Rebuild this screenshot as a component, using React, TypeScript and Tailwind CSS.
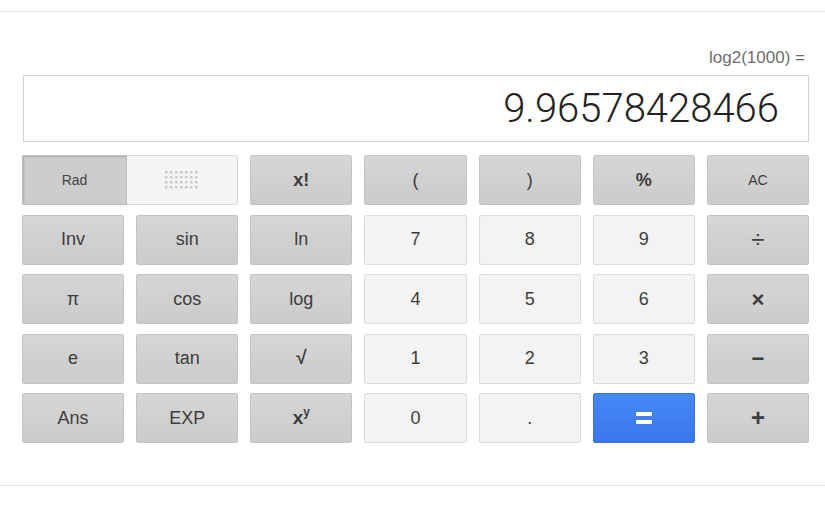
import React from "react";

type Kind = "dark" | "light" | "blue";

const dark =
  "bg-gradient-to-b from-[#d6d6d6] to-[#cbcbcb] border border-[#c4c4c4] text-[#3d3d3d]";
const light = "bg-[#f3f3f3] border border-[#dcdcdc] text-[#3d3d3d]";
const blue = "bg-gradient-to-b from-[#4689f8] to-[#3a76ec] border border-[#3a72e0] text-white";

function Key({ kind, children, cls = "text-[18px]" }: { kind: Kind; children: React.ReactNode; cls?: string }) {
  const k = kind === "dark" ? dark : kind === "light" ? light : blue;
  return (
    <div className={`${k} rounded-[2px] flex items-center justify-center ${cls}`}>
      {children}
    </div>
  );
}

function Dots() {
  const dots = [];
  for (let r = 0; r < 4; r++)
    for (let c = 0; c < 7; c++)
      dots.push(<rect key={`${r}-${c}`} x={c * 5} y={r * 5} width="2.5" height="2.5" fill="#c9c9c9" />);
  return (
    <svg width="34" height="18" viewBox="0 0 34 18">
      {dots}
    </svg>
  );
}

export default function App() {
  const font = { fontFamily: "'Liberation Sans', Arial, sans-serif" };
  return (
    <div className="w-[825px] h-[510px] bg-white overflow-hidden" style={font}>
      <div className="mt-[11px] border-t border-[#e3e3e3] h-[475px] border-b flex flex-col">
        <div className="h-[30px] mt-[33px] pr-[20px] flex items-start justify-end text-[17px] text-[#6e6e6e]">
          log2(1000) =
        </div>
        <div className="ml-[23px] w-[786px] h-[67px] border border-[#d4d4d4] flex items-center justify-end pr-[29px] pt-[1px]">
          <span className="text-[40px] text-[#222] font-light leading-none" style={{ fontFamily: "Roboto, 'Liberation Sans', sans-serif" }}>
            9.96578428466
          </span>
        </div>
        <div className="ml-[22px] mt-[13px] w-[787px] grid grid-cols-7 gap-x-3 gap-y-[9.5px] auto-rows-[50px]">
          <div className="col-span-2 flex rounded-[2px] overflow-hidden">
            <div className="w-[105px] bg-[#cdcdcd] border border-[#bdbdbd] shadow-[inset_1px_1px_2px_rgba(0,0,0,0.15)] flex items-center justify-center text-[14px] text-[#444]">
              Rad
            </div>
            <div className="flex-1 bg-[#f4f4f4] border border-[#d8d8d8] border-l-0 flex items-center justify-center">
              <Dots />
            </div>
          </div>
          <Key kind="dark" cls="text-[18px] font-semibold">x!</Key>
          <Key kind="dark">(</Key>
          <Key kind="dark">)</Key>
          <Key kind="dark" cls="text-[18px] font-semibold">%</Key>
          <Key kind="dark" cls="text-[14px]">AC</Key>

          <Key kind="dark">Inv</Key>
          <Key kind="dark">sin</Key>
          <Key kind="dark">ln</Key>
          <Key kind="light">7</Key>
          <Key kind="light">8</Key>
          <Key kind="light">9</Key>
          <Key kind="dark" cls="text-[24px]">÷</Key>

          <Key kind="dark">π</Key>
          <Key kind="dark">cos</Key>
          <Key kind="dark">log</Key>
          <Key kind="light">4</Key>
          <Key kind="light">5</Key>
          <Key kind="light">6</Key>
          <Key kind="dark" cls="text-[22px] font-bold">×</Key>

          <Key kind="dark">e</Key>
          <Key kind="dark">tan</Key>
          <Key kind="dark" cls="text-[19px] font-semibold">√</Key>
          <Key kind="light">1</Key>
          <Key kind="light">2</Key>
          <Key kind="light">3</Key>
          <Key kind="dark" cls="text-[22px] font-bold">−</Key>

          <Key kind="dark">Ans</Key>
          <Key kind="dark">EXP</Key>
          <Key kind="dark" cls="text-[19px] font-semibold">
            <span>x</span>
            <span className="text-[12px] relative -top-[6px]">y</span>
          </Key>
          <Key kind="light">0</Key>
          <Key kind="light">.</Key>
          <Key kind="blue">
            <div className="flex flex-col gap-[4px]">
              <div className="w-[16px] h-[4px] bg-white rounded-[1px]" />
              <div className="w-[16px] h-[4px] bg-white rounded-[1px]" />
            </div>
          </Key>
          <Key kind="dark" cls="text-[24px] font-semibold">+</Key>
        </div>
      </div>
    </div>
  );
}
